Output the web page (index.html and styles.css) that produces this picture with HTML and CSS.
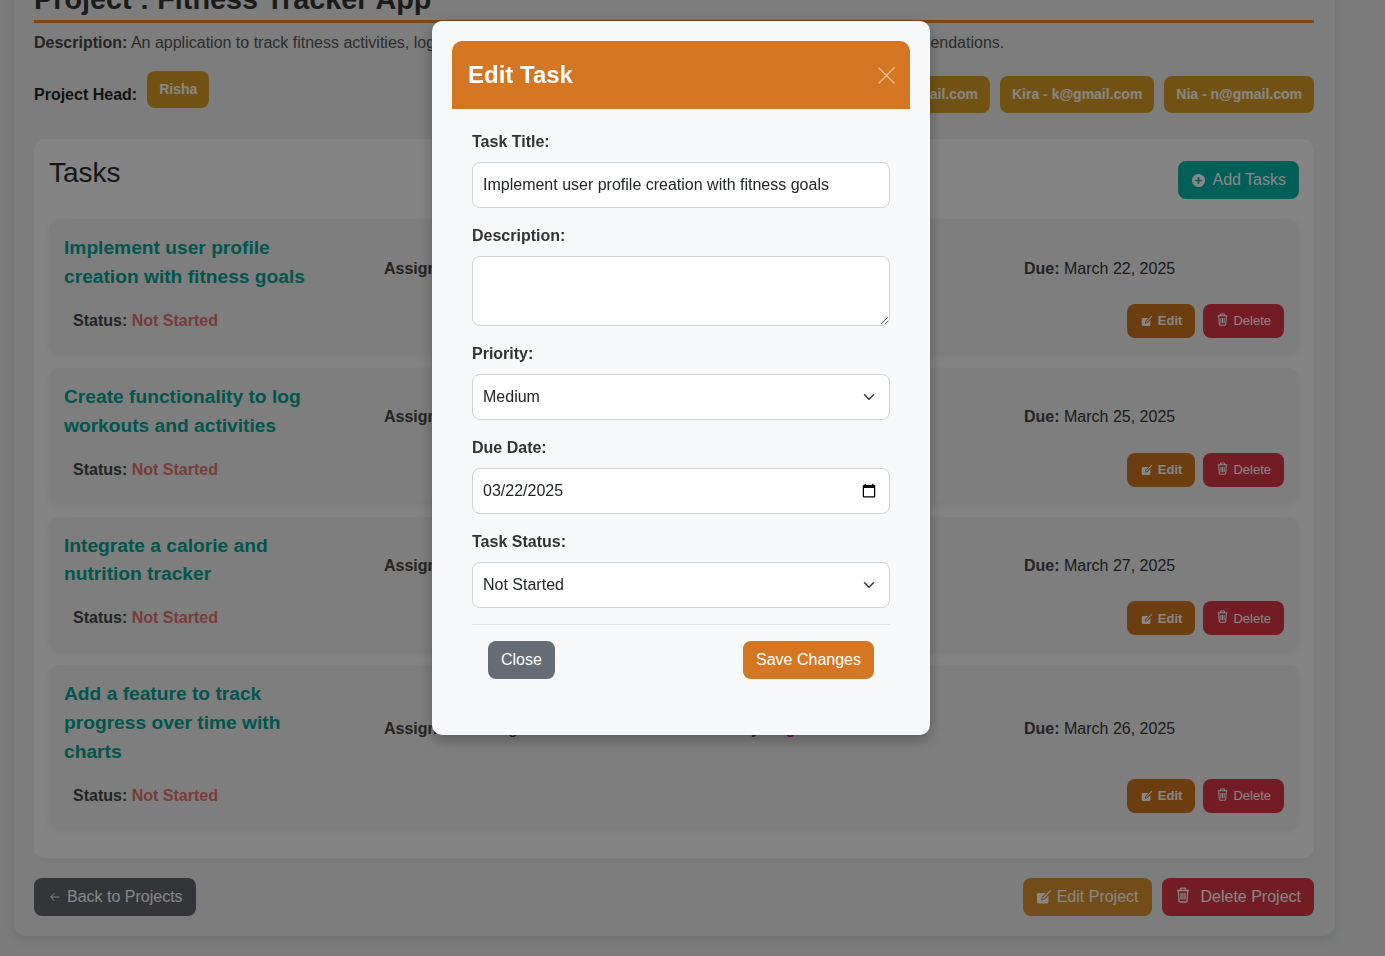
FILE: index.html
```html
<!DOCTYPE html>
<html lang="en">
<head>
    <meta charset="UTF-8">
    <meta name="viewport" content="width=device-width, initial-scale=1.0">
    <title>Project Details</title>
    <link rel="stylesheet" href="styles.css">
</head>
<body>
    <svg class="defs" width="0" height="0">
        <symbol id="i-edit" viewBox="0 0 16 16">
            <path d="M2.500 4H9.800L6 7.800 5 11.500l3.700-1L12.500 6.700V13a1.500 1.500 0 0 1-1.500 1.500H2.500A1.500 1.500 0 0 1 1 13V5.500A1.500 1.500 0 0 1 2.500 4z"/>
            <path d="M6.800 9.700 14.500 1.500" fill="none" stroke="currentColor" stroke-width="1.400"/>
        </symbol>
        <symbol id="i-trash" viewBox="0 0 16 16">
            <path d="M2 3.500h12M5.500 3.500V2a.8.8 0 0 1 .8-.8h3.400a.8.8 0 0 1 .8.8v1.500M3.300 3.500l.7 10.300A1.200 1.200 0 0 0 5.200 15h5.600a1.200 1.200 0 0 0 1.200-1.200l.7-10.300M6 6v6.500M8 6v6.500M10 6v6.500" fill="none" stroke="currentColor" stroke-width="1.300"/>
        </symbol>
    </svg>

    <div class="page">
        <h1 class="project-title">Project : Fitness Tracker App</h1>
        <p class="project-desc"><b>Description:</b> An application to track fitness activities, log workouts, monitor progress, add goals, and get personalized recommendations.</p>

        <div class="people">
            <div class="head">
                <b>Project Head:</b>
                <span class="chip chip-head">Risha</span>
            </div>
            <div class="team">
                <span class="chip">Tara - t@gmail.com</span>
                <span class="chip">Kira - k@gmail.com</span>
                <span class="chip">Nia - n@gmail.com</span>
            </div>
        </div>

        <section class="tasks">
            <div class="tasks-top">
                <h2>Tasks</h2>
                <button class="btn btn-teal">
                    <svg class="ico-add" viewBox="0 0 16 16"><path d="M8 1a7 7 0 1 0 0 14A7 7 0 0 0 8 1zm.9 3.500v2.600h2.600v1.800H8.900v2.600H7.100V8.900H4.500V7.100h2.600V4.500z"/></svg>
                    Add Tasks
                </button>
            </div>

            <div class="task">
                <div class="task-row">
                    <h3>Implement user profile creation with fitness goals</h3>
                    <p class="info"><b>Assigned To:</b> Sage</p>
                    <p class="info"><b>Priority:</b> <span class="high">High</span></p>
                    <p class="info"><b>Due:</b> March 22, 2025</p>
                </div>
                <div class="task-foot">
                    <p class="status"><b>Status:</b> <span class="not-started">Not Started</span></p>
                    <div class="task-btns">
                        <button class="btn-sm btn-edit"><svg class="ico-edit"><use href="#i-edit"/></svg>Edit</button>
                        <button class="btn-sm btn-del"><svg class="ico-trash"><use href="#i-trash"/></svg>Delete</button>
                    </div>
                </div>
            </div>

            <div class="task">
                <div class="task-row">
                    <h3>Create functionality to log workouts and activities</h3>
                    <p class="info"><b>Assigned To:</b> Sage</p>
                    <p class="info"><b>Priority:</b> <span class="high">High</span></p>
                    <p class="info"><b>Due:</b> March 25, 2025</p>
                </div>
                <div class="task-foot">
                    <p class="status"><b>Status:</b> <span class="not-started">Not Started</span></p>
                    <div class="task-btns">
                        <button class="btn-sm btn-edit"><svg class="ico-edit"><use href="#i-edit"/></svg>Edit</button>
                        <button class="btn-sm btn-del"><svg class="ico-trash"><use href="#i-trash"/></svg>Delete</button>
                    </div>
                </div>
            </div>

            <div class="task">
                <div class="task-row">
                    <h3>Integrate a calorie and nutrition tracker</h3>
                    <p class="info"><b>Assigned To:</b> Sage</p>
                    <p class="info"><b>Priority:</b> <span class="high">High</span></p>
                    <p class="info"><b>Due:</b> March 27, 2025</p>
                </div>
                <div class="task-foot">
                    <p class="status"><b>Status:</b> <span class="not-started">Not Started</span></p>
                    <div class="task-btns">
                        <button class="btn-sm btn-edit"><svg class="ico-edit"><use href="#i-edit"/></svg>Edit</button>
                        <button class="btn-sm btn-del"><svg class="ico-trash"><use href="#i-trash"/></svg>Delete</button>
                    </div>
                </div>
            </div>

            <div class="task">
                <div class="task-row">
                    <h3>Add a feature to track progress over time with charts</h3>
                    <p class="info"><b>Assigned To:</b> Sage</p>
                    <p class="info"><b>Priority:</b> <span class="high">High</span></p>
                    <p class="info"><b>Due:</b> March 26, 2025</p>
                </div>
                <div class="task-foot">
                    <p class="status"><b>Status:</b> <span class="not-started">Not Started</span></p>
                    <div class="task-btns">
                        <button class="btn-sm btn-edit"><svg class="ico-edit"><use href="#i-edit"/></svg>Edit</button>
                        <button class="btn-sm btn-del"><svg class="ico-trash"><use href="#i-trash"/></svg>Delete</button>
                    </div>
                </div>
            </div>
        </section>

        <div class="page-foot">
            <button class="btn btn-back">
                <svg class="ico-back" viewBox="0 0 16 16"><path d="M14 8H2.500M7 3.300 2.300 8 7 12.700" fill="none" stroke="currentColor" stroke-width="1.300"/></svg>
                Back to Projects
            </button>
            <div class="page-actions">
                <button class="btn btn-project-edit"><svg class="ico-edit-lg"><use href="#i-edit"/></svg>Edit Project</button>
                <button class="btn btn-project-del"><svg class="ico-trash-lg"><use href="#i-trash"/></svg>Delete Project</button>
            </div>
        </div>
    </div>

    <!-- Edit task modal -->
    <div class="backdrop"></div>
    <div class="modal">
        <div class="modal-head">
            <h2>Edit Task</h2>
            <svg class="modal-x" viewBox="0 0 16 16"><path d="M.5.5l15 15M15.500.5l-15 15" fill="none" stroke="currentColor" stroke-width="1.100"/></svg>
        </div>
        <form class="modal-form">
            <div class="group">
                <label for="title">Task Title:</label>
                <input type="text" id="title" class="field" value="Implement user profile creation with fitness goals">
            </div>
            <div class="group">
                <label for="desc">Description:</label>
                <textarea id="desc" class="field field-area"></textarea>
            </div>
            <div class="group">
                <label for="priority">Priority:</label>
                <select id="priority" class="field field-select">
                    <option>Low</option>
                    <option selected>Medium</option>
                    <option>High</option>
                </select>
            </div>
            <div class="group">
                <label for="due">Due Date:</label>
                <input type="date" id="due" class="field field-date" value="2025-03-22">
            </div>
            <div class="group">
                <label for="state">Task Status:</label>
                <select id="state" class="field field-select">
                    <option selected>Not Started</option>
                    <option>In Progress</option>
                    <option>Completed</option>
                </select>
            </div>
            <div class="modal-foot">
                <button type="button" class="btn btn-close">Close</button>
                <button type="button" class="btn btn-save">Save Changes</button>
            </div>
        </form>
    </div>
</body>
</html>
```

FILE: styles.css
```css
* {
    box-sizing: border-box;
}

html, body {
    height: 100%;
    overflow: hidden;
}

body {
    margin: 0;
    font-family: "Liberation Sans", Arial, sans-serif;
    font-size: 16px;
    line-height: 24px;
    background-color: #e8e9e9;
    color: #333;
}

.defs {
    position: absolute;
}

svg {
    fill: currentColor;
}

/* Page behind the modal, scrolled a little */
.page {
    width: 1321px;
    margin: -38px 0 0 14px;
    padding: 20px 21px 20px 20px;
    background: #ecedec;
    border-radius: 12px;
    box-shadow: 0 4px 12px rgba(0, 0, 0, 0.1);
}

.project-title {
    margin: 0 0 8px;
    padding-bottom: 4px;
    font-size: 28.8px;
    line-height: 34px;
    color: #333;
    border-bottom: 3px solid #e8872c;
}

.project-desc {
    margin: 0 0 16px;
    color: #555;
}

.project-desc b {
    color: #444;
}

.people {
    display: flex;
    justify-content: space-between;
    align-items: center;
    margin-bottom: 21px;
}

.head {
    display: flex;
    align-items: center;
    gap: 10px;
}

.head b {
    color: #222;
}

.team {
    display: flex;
    gap: 10px;
}

.chip {
    display: inline-block;
    padding: 8px 12px;
    font-size: 14px;
    line-height: 21px;
    font-weight: bold;
    color: #fff;
    background: #d79b25;
    border-radius: 8px;
}

.chip-head {
    margin-bottom: 10px;
}

/* Tasks panel */
.tasks {
    padding: 15px;
    background: #fafafa;
    border-radius: 10px;
    box-shadow: 0 2px 6px rgba(0, 0, 0, 0.04);
}

.tasks-top {
    display: flex;
    justify-content: space-between;
    align-items: flex-start;
    height: 65.4px;
}

.tasks-top h2 {
    margin: 1px 0 0;
    font-size: 28px;
    line-height: 36px;
    font-weight: normal;
    color: #2a2a2a;
}

.tasks-top .btn {
    margin-top: 7px;
}

.task {
    margin-bottom: 15px;
    padding: 15px 15px 15px;
    background: #eeefee;
    border-radius: 10px;
    box-shadow: 0 3px 8px rgba(0, 0, 0, 0.08);
}

.task:last-child {
    margin-bottom: 15.6px;
}

.task-row {
    display: grid;
    grid-template-columns: 320px 320px 320px 1fr;
    align-items: center;
    margin-bottom: 12px;
}

.task-row h3 {
    margin: 0;
    padding-right: 50px;
    font-size: 19.2px;
    line-height: 28.8px;
    font-weight: bold;
    color: #00a196;
}

.info {
    margin: 11px 0 0;
    color: #333;
}

.info b {
    color: #444;
}

.high {
    color: #e0109a;
    font-weight: bold;
}

.task-foot {
    display: flex;
    justify-content: space-between;
    align-items: center;
}

.status {
    margin: 0 0 0 9px;
    font-weight: bold;
    color: #444;
}

.not-started {
    color: #e56f6f;
}

.task-btns {
    display: flex;
    gap: 8px;
}

/* Buttons */
button {
    font-family: inherit;
    border: 0;
    color: #fff;
    cursor: pointer;
}

.btn {
    display: inline-flex;
    align-items: center;
    height: 38px;
    padding: 0 13px;
    font-size: 16px;
    border-radius: 8px;
}

.btn-sm {
    display: inline-flex;
    align-items: center;
    height: 34px;
    padding: 0 13px;
    font-size: 13px;
    border-radius: 8px;
}

.btn-edit {
    padding-left: 14px;
    font-weight: bold;
    background: #cc741e;
}

.btn-del {
    background: #dc3545;
}

.btn-teal {
    background: #00b3a9;
}

.btn-back {
    padding: 0 13px 0 15px;
    background: #60656d;
}

.btn-project-edit {
    background: #d79230;
}

.btn-project-del {
    background: #dc3545;
}

.ico-add {
    width: 15px;
    height: 15px;
    margin-right: 6px;
}

.ico-back {
    width: 12px;
    height: 12px;
    margin-right: 6px;
}

.ico-edit {
    width: 12px;
    height: 12px;
    margin: 1px 5px 0 0;
}

.ico-trash {
    width: 13px;
    height: 13px;
    margin: 0 4px 3px 0;
}

.ico-edit-lg {
    width: 16px;
    height: 16px;
    margin-right: 5px;
}

.ico-trash-lg {
    width: 16px;
    height: 16px;
    margin: 0 10px 5px 0;
}

.page-foot {
    display: flex;
    justify-content: space-between;
    margin-top: 20px;
}

.page-actions {
    display: flex;
    gap: 10px;
}

/* Modal */
.backdrop {
    position: fixed;
    inset: 0;
    background: rgba(0, 0, 0, 0.47);
}

.modal {
    position: fixed;
    left: 432px;
    top: 21px;
    width: 498px;
    padding: 20px;
    background: #f8f9fa;
    border-radius: 10px;
    box-shadow: 0 5px 15px rgba(0, 0, 0, 0.3);
}

.modal-head {
    display: flex;
    justify-content: space-between;
    align-items: center;
    height: 68px;
    padding: 0 16px;
    color: #fff;
    background: #d57623;
    border-radius: 10px 10px 0 0;
}

.modal-head h2 {
    margin: 0 0 2px;
    font-size: 24px;
    line-height: 29px;
    font-weight: bold;
}

.modal-x {
    width: 17px;
    height: 17px;
    margin-right: -1px;
    opacity: 0.55;
}

.modal-form {
    padding: 21px 20px 36px;
}

.group {
    margin-bottom: 16px;
}

.group label {
    display: block;
    margin-bottom: 8px;
    font-weight: bold;
    color: #333;
}

.field {
    display: block;
    width: 100%;
    height: 46px;
    padding: 0 10px;
    font-family: inherit;
    font-size: 16px;
    color: #212529;
    background-color: #fff;
    border: 1px solid #ced4da;
    border-radius: 8px;
}

.field-area {
    height: 70px;
    padding: 10px;
}

.field-date::-webkit-datetime-edit-month-field,
.field-date::-webkit-datetime-edit-day-field,
.field-date::-webkit-datetime-edit-year-field {
    padding: 0;
}

.field-select {
    padding-bottom: 2px;
    appearance: none;
    background-image: url("data:image/svg+xml,%3csvg xmlns='http://www.w3.org/2000/svg' viewBox='0 0 16 16'%3e%3cpath fill='none' stroke='%23343a40' stroke-linecap='round' stroke-linejoin='round' stroke-width='2' d='m2 5 6 6 6-6'/%3e%3c/svg%3e");
    background-repeat: no-repeat;
    background-position: right 14px center;
    background-size: 12px 12px;
}

.modal-foot {
    display: flex;
    justify-content: space-between;
    padding: 16px 16px 0;
    border-top: 1px solid #dee2e6;
}

.btn-close {
    background: #656c75;
}

.btn-save {
    background: #d57623;
}
```
